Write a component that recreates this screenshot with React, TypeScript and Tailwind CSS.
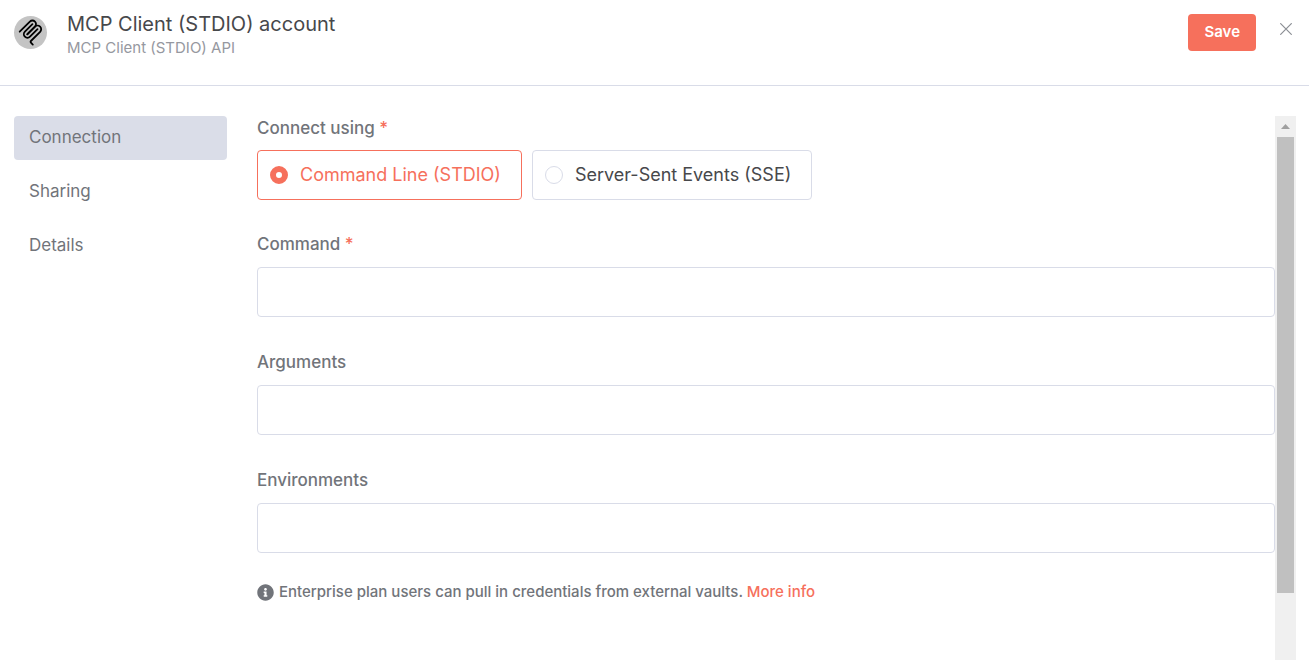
import { useState } from "react";
import { FaInfoCircle } from "react-icons/fa";

const tabs = ["Connection", "Sharing", "Details"];

const transports = [
  { value: "stdio", label: "Command Line (STDIO)" },
  { value: "sse", label: "Server-Sent Events (SSE)" },
];

const fields = [
  { id: "command", label: "Command", required: true },
  { id: "arguments", label: "Arguments", required: false },
  { id: "environments", label: "Environments", required: false },
];

function McpLogo() {
  return (
    <span className="flex size-[33px] shrink-0 items-center justify-center rounded-full bg-[#c4c4c4]">
      <svg
        viewBox="0 0 180 180"
        className="size-[27px]"
        fill="none"
        stroke="#000"
        strokeWidth="12"
        strokeLinecap="round"
        aria-hidden="true"
      >
        <path d="M18 84.8528L85.8822 16.9706C95.2548 7.59798 110.451 7.59798 119.823 16.9706C129.196 26.3431 129.196 41.5391 119.823 50.9117L68.5581 102.177" />
        <path d="M69.2652 101.47L119.823 50.9117C129.196 41.5391 144.392 41.5391 153.765 50.9117L154.118 51.2652C163.491 60.6378 163.491 75.8338 154.118 85.2063L92.7248 146.6C89.6006 149.724 89.6006 154.789 92.7248 157.913L105.331 170.52" />
        <path d="M102.853 33.9411L52.6482 84.1457C43.2756 93.5183 43.2756 108.714 52.6482 118.087C62.0208 127.459 77.2167 127.459 86.5893 118.087L136.794 67.8822" />
      </svg>
    </span>
  );
}

function Required() {
  return <span className="text-[#f6705c]"> *</span>;
}

function ScrollTrack() {
  return (
    <div className="flex w-[21px] shrink-0 flex-col bg-[#f0f0f0] px-[2px]" aria-hidden="true">
      <div className="flex h-[21px] shrink-0 items-center justify-center">
        <svg viewBox="0 0 9 5" className="h-[5px] w-[9px]" fill="#a0a0a0">
          <path d="M4.5 0L9 5H0Z" />
        </svg>
      </div>
      <div className="grow-456 basis-0 bg-[#c0c0c0]" />
      <div className="grow-67 basis-0" />
    </div>
  );
}

export default function App() {
  const [tab, setTab] = useState("Connection");
  const [transport, setTransport] = useState("stdio");

  return (
    <div className="flex min-h-screen flex-col bg-white font-['Inter',sans-serif] text-[#71747a]">
      <header className="flex items-start border-b border-[#d9dce8] pt-[11px] pr-[17px] pb-[25px] pl-[14px]">
        <div className="flex grow gap-5 pt-px">
          <div className="pt-1">
            <McpLogo />
          </div>
          <div>
            <h1 className="text-[20px] leading-6 text-[#47484b]">MCP Client (STDIO) account</h1>
            <p className="text-[15px] leading-6 text-[#9698a0]">MCP Client (STDIO) API</p>
          </div>
        </div>
        <div className="flex items-start gap-6 pt-[3px]">
          <button
            type="button"
            className="h-[37px] rounded bg-[#f6705c] px-4 text-[15px] font-semibold text-white"
          >
            Save
          </button>
          <button type="button" aria-label="Close" className="mt-[9px]">
            <svg viewBox="0 0 12 12" className="size-3" fill="none" stroke="#8b8e94" strokeWidth="1.2" aria-hidden="true">
              <path d="M0.3 0.3L11.7 11.7M11.7 0.3L0.3 11.7" />
            </svg>
          </button>
        </div>
      </header>

      <div className="flex grow pt-[30px] pr-[13px] pl-[14px]">
        <nav className="mr-[30px] flex w-[213px] shrink-0 flex-col gap-[10px]">
          {tabs.map((name) => (
            <button
              key={name}
              type="button"
              onClick={() => setTab(name)}
              className={`h-11 rounded px-[15px] text-left text-[17px] ${tab === name ? "bg-[#dadde8]" : ""}`}
            >
              {name}
            </button>
          ))}
        </nav>

        <main className="min-w-0 grow">
          <fieldset className="mb-8">
            <legend className="h-[34px] text-[17px] leading-6 font-medium">
              Connect using
              <Required />
            </legend>
            <div className="flex flex-wrap gap-[10px]">
              {transports.map(({ value, label }) => (
                <label
                  key={value}
                  className={`flex h-[50px] items-center gap-3 rounded border pr-5 pl-3 text-[18px] leading-6 ${
                    transport === value ? "border-[#f6705c] text-[#f6705c]" : "border-[#d9dce8] text-[#47484b]"
                  }`}
                >
                  <input
                    type="radio"
                    name="transport"
                    value={value}
                    checked={transport === value}
                    onChange={() => setTransport(value)}
                    className="size-[18px] appearance-none rounded-full border border-[#d9dce8] bg-white checked:border-[6px] checked:border-[#f6705c]"
                  />
                  {label}
                </label>
              ))}
            </div>
          </fieldset>

          <div className="flex flex-col gap-[33px]">
            {fields.map(({ id, label, required }) => (
              <div key={id}>
                <label htmlFor={id} className="block h-[35px] text-[17px] leading-6 font-medium">
                  {label}
                  {required && <Required />}
                </label>
                <input
                  id={id}
                  type="text"
                  className="block h-[50px] w-full rounded border border-[#d9dce8] px-3 text-[17px] text-[#47484b] outline-none"
                />
              </div>
            ))}
          </div>

          <p className="mt-[27px] flex items-center gap-[5px] text-[15px] leading-6 font-medium">
            <FaInfoCircle className="size-[17px]" aria-hidden="true" />
            <span>
              Enterprise plan users can pull in credentials from external vaults.{" "}
              <a href="#more-info" className="text-[#f6705c]">
                More info
              </a>
            </span>
          </p>
        </main>

        <ScrollTrack />
      </div>
    </div>
  );
}
